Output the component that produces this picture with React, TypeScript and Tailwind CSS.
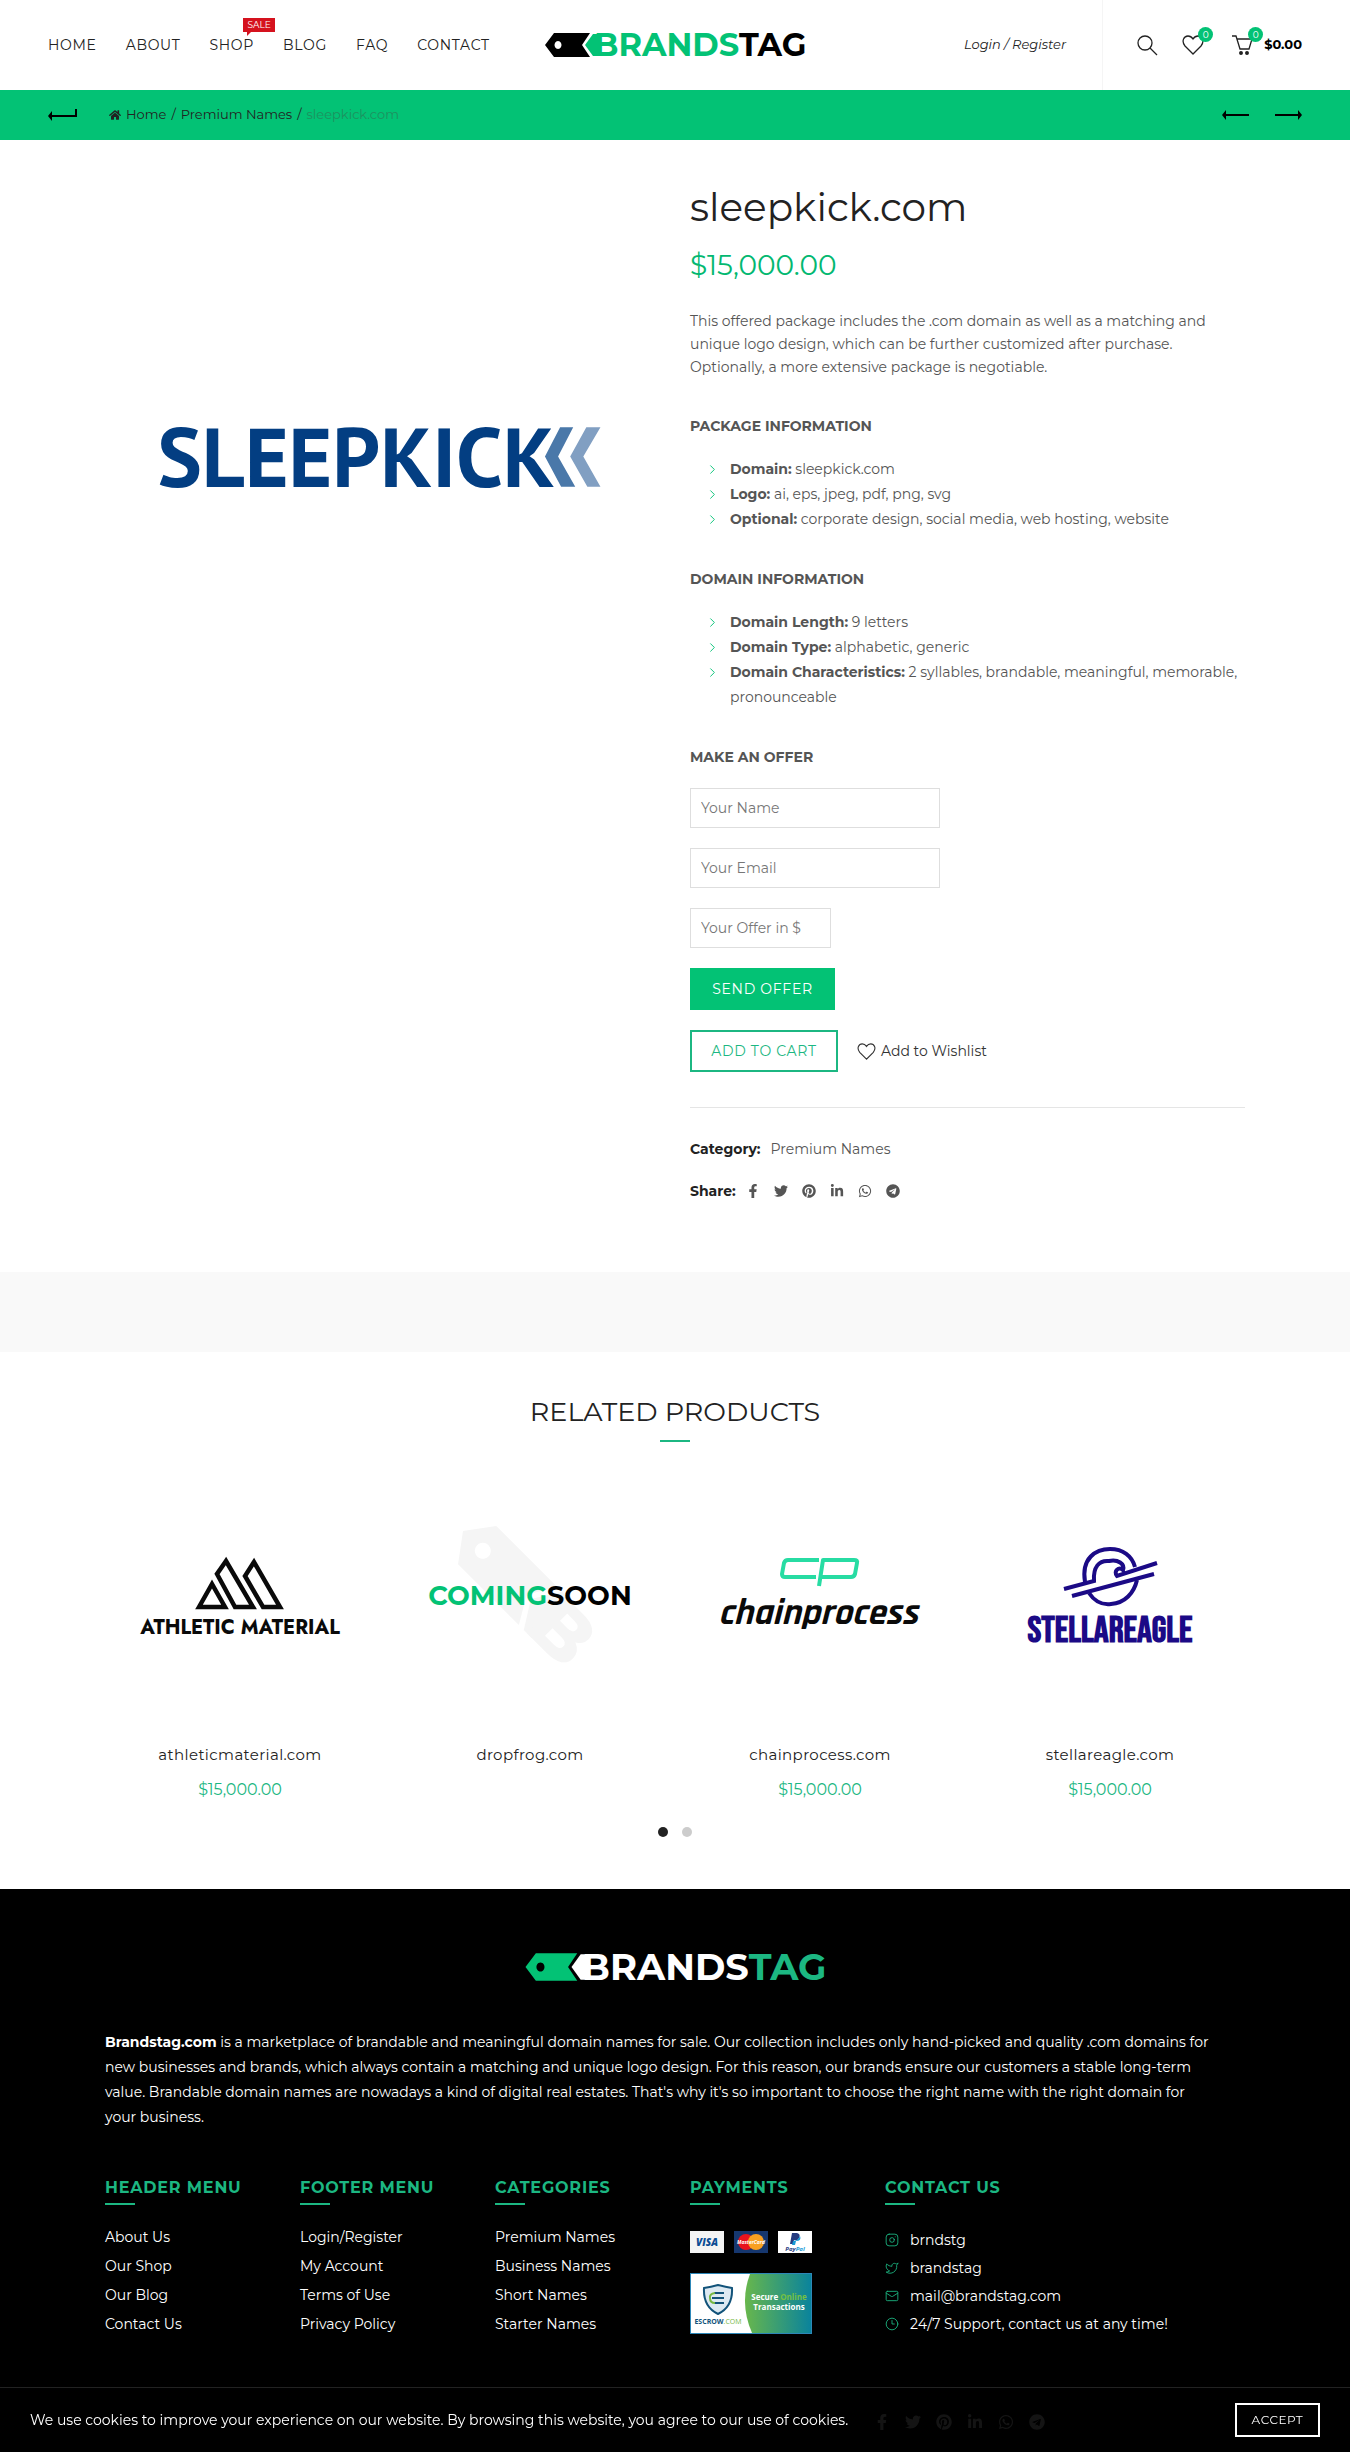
import React, { useState } from 'react';
import {
  FaFacebookF,
  FaHome,
  FaLinkedinIn,
  FaPinterest,
  FaTelegram,
  FaTwitter,
  FaWhatsapp,
} from 'react-icons/fa';
import { ChevronRight, Clock3, Instagram, Mail, Twitter } from 'lucide-react';

const NAV_ITEMS = ['Home', 'About', 'Shop', 'Blog', 'FAQ', 'Contact'];

const SOCIALS = [
  { name: 'Facebook', Icon: FaFacebookF },
  { name: 'Twitter', Icon: FaTwitter },
  { name: 'Pinterest', Icon: FaPinterest },
  { name: 'LinkedIn', Icon: FaLinkedinIn },
  { name: 'WhatsApp', Icon: FaWhatsapp },
  { name: 'Telegram', Icon: FaTelegram },
];

const PACKAGE_INFO = [
  { label: 'Domain:', value: 'sleepkick.com' },
  { label: 'Logo:', value: 'ai, eps, jpeg, pdf, png, svg' },
  { label: 'Optional:', value: 'corporate design, social media, web hosting, website' },
];

const DOMAIN_INFO = [
  { label: 'Domain Length:', value: '9 letters' },
  { label: 'Domain Type:', value: 'alphabetic, generic' },
  { label: 'Domain Characteristics:', value: '2 syllables, brandable, meaningful, memorable, pronounceable' },
];

const FOOTER_MENUS = [
  { title: 'Header Menu', links: ['About Us', 'Our Shop', 'Our Blog', 'Contact Us'] },
  { title: 'Footer Menu', links: ['Login/Register', 'My Account', 'Terms of Use', 'Privacy Policy'] },
  { title: 'Categories', links: ['Premium Names', 'Business Names', 'Short Names', 'Starter Names'] },
];

const CONTACTS = [
  { text: 'brndstg', Icon: Instagram },
  { text: 'brandstag', Icon: Twitter },
  { text: 'mail@brandstag.com', Icon: Mail },
  { text: '24/7 Support, contact us at any time!', Icon: Clock3 },
];

interface BrandLogoProps {
  className: string;
  tag: string;
  brand: string;
  suffix: string;
}

const BrandLogo: React.FC<BrandLogoProps> = ({ className, tag, brand, suffix }) => (
  <svg viewBox="0 -8 260 40" className={className} role="img" aria-label="Brandstag">
    <path
      fillRule="evenodd"
      fill={tag}
      d="M0 12L9 0H45L37 12L45 24H9ZM13 8a3.5 4 0 1 0 .01 0Z"
    />
    <path fill={brand} d="M40 12L48 1H54V23H48Z" />
    <text x="49" y="23" fontFamily="Montserrat, Inter, sans-serif" fontWeight="700" fontSize="32" fill={brand}>
      BRANDS
      <tspan fill={suffix}>TAG</tspan>
    </text>
  </svg>
);

const SearchIcon = () => (
  <svg viewBox="0 0 21 21" className="h-[21px] w-[21px]" fill="none" stroke="currentColor" strokeWidth="1.3">
    <circle cx="8" cy="8" r="7" />
    <path d="M13 13L20 20" />
  </svg>
);

const HeartIcon = ({ className }: { className: string }) => (
  <svg viewBox="0 0 22 20" className={className} fill="none" stroke="currentColor" strokeWidth="1.3">
    <path d="M11 19L3 11C-1 6 2 1 6 1C8.500 1 10 2.500 11 4C12 2.500 13.500 1 16 1C20 1 23 6 19 11Z" />
  </svg>
);

const CartIcon = () => (
  <svg viewBox="0 0 22 20" className="h-5 w-[22px]" fill="none" stroke="currentColor" strokeWidth="1.3">
    <path d="M0 1H4L8 14H17L20 4H5" />
    <circle cx="9" cy="18" r="1.300" fill="currentColor" />
    <circle cx="15" cy="18" r="1.300" fill="currentColor" />
  </svg>
);

const ArrowIcon = ({ flip = false }: { flip?: boolean }) => (
  <svg viewBox="0 0 27 10" className={`h-2.5 w-[27px] ${flip ? 'rotate-180' : ''}`}>
    <path d="M0 5L4 0V4H27V6H4V10Z" />
  </svg>
);

const Badge = () => (
  <span className="absolute -top-2 left-4 flex h-[15px] w-[15px] items-center justify-center rounded-full bg-[#03c275] text-[9px] leading-none text-white">
    0
  </span>
);

const Header = () => (
  <header className="grid h-[90px] grid-cols-[1fr_auto_1fr] items-center bg-white text-[#222]">
    <nav className="flex items-center gap-[29px] pl-12 text-sm tracking-wider uppercase">
      {NAV_ITEMS.map((item) => (
        <a key={item} href="#" className="relative">
          {item}
          {item === 'Shop' && (
            <span className="absolute -top-[17px] left-[34px] bg-[#d5121e] px-1 text-[9px] leading-[14px] tracking-normal text-white">
              Sale
              <span className="absolute top-full left-1 border-t-4 border-r-4 border-t-[#d5121e] border-r-transparent" />
            </span>
          )}
        </a>
      ))}
    </nav>

    <a href="#">
      <BrandLogo className="h-10 w-[260px]" tag="#000" brand="#03c275" suffix="#000" />
    </a>

    <div className="flex h-full items-center justify-end">
      <a href="#" className="mr-9 text-[13px] italic">
        Login / Register
      </a>
      <div className="h-full border-l border-[#f5f5f5]" />
      <div className="flex items-center pr-12 pl-[34px]">
        <button type="button" aria-label="Search" className="mr-6">
          <SearchIcon />
        </button>
        <a href="#" aria-label="Wishlist" className="relative mr-7">
          <HeartIcon className="h-5 w-[22px]" />
          <Badge />
        </a>
        <a href="#" className="flex items-center gap-[10px]">
          <span className="relative">
            <CartIcon />
            <Badge />
          </span>
          <span className="text-[13px] font-bold text-black">$0.00</span>
        </a>
      </div>
    </div>
  </header>
);

const Breadcrumbs = () => (
  <div className="flex h-[50px] items-center justify-between bg-[#03c275] px-12 text-[13px] text-[#222]">
    <div className="flex items-center">
      <a href="#" aria-label="Back" className="mr-[31px]">
        <svg viewBox="0 0 30 12" className="h-3 w-[30px]">
          <path d="M0 7L4 2V6H27V0H29V8H4V12Z" />
        </svg>
      </a>
      <nav className="flex items-center gap-[5px]">
        <a href="#" className="flex items-center gap-[5px]">
          <FaHome className="h-3 w-3" />
          Home
        </a>
        <span>/</span>
        <a href="#">Premium Names</a>
        <span>/</span>
        <span className="text-[#1e915f]">sleepkick.com</span>
      </nav>
    </div>
    <div className="flex items-center gap-[26px] text-black">
      <a href="#" aria-label="Previous product">
        <ArrowIcon />
      </a>
      <a href="#" aria-label="Next product">
        <ArrowIcon flip />
      </a>
    </div>
  </div>
);

const InfoList = ({ items }: { items: { label: string; value: string }[] }) => (
  <ul className="mt-[19px] pl-[15px] leading-[25px]">
    {items.map((item) => (
      <li key={item.label} className="flex">
        <ChevronRight className="mt-[5px] mr-2.5 h-[15px] w-[15px] shrink-0 text-[#03c275]" strokeWidth={1.5} />
        <span>
          <strong className="font-bold">{item.label}</strong> {item.value}
        </span>
      </li>
    ))}
  </ul>
);

const SleepkickLogo = () => (
  <svg viewBox="0 0 550 550" className="w-full" role="img" aria-label="Sleepkick">
    <text x="52" y="304" fontFamily="'PT Sans', 'Open Sans', sans-serif" fontWeight="700" fontSize="83" fill="#033e82">
      SLEEPKICK
    </text>
    <path fill="#4a78a9" d="M451 245H464L449 274L466 304H452L436 274Z" />
    <path fill="#819fc2" d="M477 245H491L474 274L491 304H478L461 274Z" />
  </svg>
);

const OfferForm = () => (
  <form className="mt-[19px] flex flex-col items-start gap-5" onSubmit={(e) => e.preventDefault()}>
    <input
      type="text"
      aria-label="Your Name"
      placeholder="Your Name"
      className="h-10 w-[250px] border border-[#dedede] px-[10px] placeholder:text-[#777]"
    />
    <input
      type="email"
      aria-label="Your Email"
      placeholder="Your Email"
      className="h-10 w-[250px] border border-[#dedede] px-[10px] placeholder:text-[#777]"
    />
    <input
      type="text"
      aria-label="Your Offer in $"
      placeholder="Your Offer in $"
      className="h-10 w-[141px] border border-[#dedede] px-[10px] placeholder:text-[#777]"
    />
    <button type="submit" className="h-[42px] w-[145px] bg-[#03c275] tracking-wider text-white uppercase">
      Send Offer
    </button>
  </form>
);

const Product = () => (
  <main className="mx-auto grid max-w-[1170px] grid-cols-2 gap-[30px] px-[15px] pt-10 pb-[69px] text-sm text-[#555]">
    <SleepkickLogo />
    <div>
      <h1 className="text-[39px] leading-[54px] text-[#222]">sleepkick.com</h1>
      <p className="mt-3 text-[28px] leading-[38px] text-[#03b871]">$15,000.00</p>
      <p className="mt-[26px] leading-[23px]">
        This offered package includes the .com domain as well as a matching and unique logo design, which can be
        further customized after purchase. Optionally, a more extensive package is negotiable.
      </p>

      <h2 className="mt-[35px] leading-6 font-bold uppercase">Package Information</h2>
      <InfoList items={PACKAGE_INFO} />
      <h2 className="mt-[35px] leading-6 font-bold uppercase">Domain Information</h2>
      <InfoList items={DOMAIN_INFO} />
      <h2 className="mt-[35px] leading-6 font-bold uppercase">Make an Offer</h2>
      <OfferForm />

      <div className="mt-5 flex items-center">
        <button
          type="button"
          className="h-[42px] w-[148px] border-2 border-[#1cb782] tracking-wider text-[#1cb782] uppercase"
        >
          Add to Cart
        </button>
        <a href="#" className="ml-[19px] flex items-center gap-[5px] text-[#333]">
          <HeartIcon className="h-[17px] w-[19px]" />
          Add to Wishlist
        </a>
      </div>

      <div className="mt-[35px] border-t border-[#e5e5e5] pt-[29px] leading-6">
        <p>
          <strong className="mr-2.5 font-bold text-[#222]">Category:</strong>
          <a href="#">Premium Names</a>
        </p>
        <div className="mt-[18px] flex items-center">
          <strong className="mr-2.5 font-bold text-[#222]">Share:</strong>
          <div className="flex gap-3.5">
            {SOCIALS.map(({ name, Icon }) => (
              <a key={name} href="#" aria-label={name}>
                <Icon className="h-3.5 w-3.5" />
              </a>
            ))}
          </div>
        </div>
      </div>
    </div>
  </main>
);

const AthleticLogo = () => (
  <svg viewBox="0 0 270 270" className="w-full" role="img" aria-label="Athletic Material">
    <g transform="translate(29 0)" fill="none" stroke="#0a0a0a" strokeWidth="4.5" strokeLinejoin="miter">
      <path d="M65 142L78 119L91 142Z" />
      <path d="M92 96L83 109L101 142H119Z" />
      <path d="M120 97L111 111L129 142H146Z" />
    </g>
    <text x="135" y="169" textAnchor="middle" fontFamily="Jost, Lato, sans-serif" fontWeight="700" fontSize="20" fill="#0a0a0a">
      ATHLETIC MATERIAL
    </text>
  </svg>
);

const ComingSoonLogo = () => (
  <svg viewBox="0 0 270 270" className="w-full" role="img" aria-label="Coming soon">
    <g transform="translate(68 66) rotate(45)">
      <path
        fillRule="evenodd"
        fill="#f5f5f5"
        d="M0 0L20 -27H106L90 0L106 27H20ZM28 -8a8 8 0 1 0 .01 0Z"
      />
      <path fill="#f5f5f5" d="M96 0L113 -27H125V27H113Z" />
      <text x="112" y="27" fontFamily="Montserrat, Inter, sans-serif" fontWeight="800" fontSize="76" fill="#f5f5f5">
        B
      </text>
    </g>
    <text x="135" y="140" textAnchor="middle" fontFamily="Montserrat, Inter, sans-serif" fontWeight="700" fontSize="27" fill="#03c275">
      COMING
      <tspan fill="#000">SOON</tspan>
    </text>
  </svg>
);

const ChainprocessLogo = () => (
  <svg viewBox="0 0 270 270" className="w-full" role="img" aria-label="Chainprocess">
    <g fill="none" stroke="#27dca3" strokeWidth="4" strokeLinejoin="round">
      <path d="M134 95H103Q100 95 99 98L97 109Q97 112 100 112H131" />
      <path d="M134 121L138 95H169Q173 95 172 98L170 109Q169 112 166 112H137" />
    </g>
    <text
      x="133"
      y="159"
      textAnchor="middle"
      fontFamily="Rajdhani, 'Barlow Condensed', 'Roboto Condensed', Oswald, Roboto, sans-serif"
      fontWeight="700"
      fontStyle="italic"
      fontSize="37"
      fill="#0a0a0a"
    >
      chainprocess
    </text>
  </svg>
);

const StellareagleLogo = () => (
  <svg viewBox="0 0 270 270" className="w-full" role="img" aria-label="Stellareagle">
    <g fill="none" stroke="#1b0a86" strokeWidth="4">
      <path d="M110 117C106 93 121 84 135 84C148 84 157 91 160 102" />
      <path d="M114 128C120 137 128 140 136 139C150 138 159 128 162 115" />
      <path d="M89 124L119 116C118 102 124 95 134 96C143 94 150 99 148 105C144 101 138 106 142 111L182 98" />
      <path d="M97 131L179 109" />
    </g>
    <text
      x="135"
      y="177"
      textAnchor="middle"
      fontFamily="'Bebas Neue', Oswald, 'Barlow Condensed', 'Roboto Condensed', Roboto, sans-serif"
      fontWeight="700"
      fontSize="37"
      fill="#1b0a86"
    >
      STELLAREAGLE
    </text>
  </svg>
);

const RELATED = [
  { name: 'athleticmaterial.com', price: '$15,000.00', Logo: AthleticLogo },
  { name: 'dropfrog.com', price: '', Logo: ComingSoonLogo },
  { name: 'chainprocess.com', price: '$15,000.00', Logo: ChainprocessLogo },
  { name: 'stellareagle.com', price: '$15,000.00', Logo: StellareagleLogo },
];

const RelatedProducts = () => {
  const [page, setPage] = useState<number>(0);

  return (
    <section className="mx-auto max-w-[1170px] px-[15px] pt-[42px] pb-[52px] text-center">
      <h2 className="text-[27px] leading-9 text-[#222] uppercase">Related Products</h2>
      <div className="mx-auto mt-[10px] h-0.5 w-[30px] bg-[#1cb782]" />
      <div className="mt-[23px] grid grid-cols-4 gap-5">
        {RELATED.map(({ name, price, Logo }) => (
          <a key={name} href="#" className="block">
            <Logo />
            <h3 className="mt-2 text-[15px] leading-6 tracking-wide text-[#222]">{name}</h3>
            <p className="mt-[11px] h-6 leading-6 text-[#1cb782]">{price}</p>
          </a>
        ))}
      </div>
      <div className="mt-[25px] flex justify-center gap-3.5">
        {[0, 1].map((index) => (
          <button
            key={index}
            type="button"
            aria-label={`Page ${index + 1}`}
            onClick={() => setPage(index)}
            className={`h-2.5 w-2.5 rounded-full ${page === index ? 'bg-[#222]' : 'bg-[#ccc]'}`}
          />
        ))}
      </div>
    </section>
  );
};

const FooterTitle = ({ children }: { children: React.ReactNode }) => (
  <div className="text-[#1cb782]">
    <h4 className="text-base leading-6 font-bold tracking-wider whitespace-nowrap uppercase">{children}</h4>
    <div className="mt-[3px] h-0.5 w-[30px] bg-[#1cb782]" />
  </div>
);

const PaymentCards = () => (
  <svg viewBox="0 0 122 22" className="h-[22px] w-[122px]" role="img" aria-label="Visa, MasterCard, PayPal">
    <rect width="34" height="22" fill="#f4f4f4" />
    <text x="17" y="15" textAnchor="middle" fontFamily="'Open Sans', sans-serif" fontWeight="800" fontStyle="italic" fontSize="10" fill="#0b4c93">
      VISA
    </text>
    <rect x="44" width="34" height="22" fill="#16376f" />
    <circle cx="56" cy="11" r="8" fill="#e8131d" />
    <circle cx="66" cy="11" r="8" fill="#f8a021" />
    <text x="61" y="13" textAnchor="middle" fontFamily="'Open Sans', sans-serif" fontWeight="700" fontStyle="italic" fontSize="5" fill="#fff">
      MasterCard
    </text>
    <rect x="88" width="34" height="22" fill="#fff" />
    <path fill="#253b80" d="M102 2H107Q111 3 109 7Q108 10 104 9L103 13H100Z" />
    <path fill="#179bd7" d="M110 5Q112 10 106 10L105 14H102L103 10Q108 10 110 5Z" />
    <text x="105" y="20" textAnchor="middle" fontFamily="'Open Sans', sans-serif" fontWeight="700" fontStyle="italic" fontSize="6" fill="#253b80">
      Pay
      <tspan fill="#179bd7">Pal</tspan>
    </text>
  </svg>
);

const EscrowBadge = () => (
  <svg viewBox="0 0 122 61" className="mt-5 h-[61px] w-[122px]" role="img" aria-label="Escrow.com secure online transactions">
    <defs>
      <linearGradient id="escrow" x1="0" y1="0" x2="1" y2="0">
        <stop offset="0" stopColor="#68b74c" />
        <stop offset="1" stopColor="#0a839c" />
      </linearGradient>
    </defs>
    <rect width="122" height="61" fill="#2d87b8" />
    <rect x="1" y="1" width="120" height="59" fill="#fff" />
    <path fill="url(#escrow)" d="M60 1H121V60H62Q49 30 60 1Z" />
    <path fill="#dce9f2" stroke="#12537a" strokeWidth="2" d="M28 12Q36 14 42 15Q43 34 28 41Q13 34 14 15Q21 14 28 12Z" />
    <path fill="none" stroke="#12537a" strokeWidth="2" d="M24 20H34M22 25H34M24 30H34" />
    <path fill="none" stroke="#76b843" strokeWidth="2" d="M25 20Q19 21 20 25Q20 30 25 30" />
    <text x="28" y="51" textAnchor="middle" fontFamily="'Open Sans', sans-serif" fontWeight="700" fontSize="7" fill="#12537a">
      ESCROW
      <tspan fill="#76b843" fontWeight="400">.COM</tspan>
    </text>
    <text x="89" y="27" textAnchor="middle" fontFamily="'Open Sans', sans-serif" fontWeight="700" fontSize="8" fill="#fff">
      Secure <tspan fill="#76c043">Online</tspan>
    </text>
    <text x="89" y="37" textAnchor="middle" fontFamily="'Open Sans', sans-serif" fontWeight="700" fontSize="8" fill="#fff">
      Transactions
    </text>
  </svg>
);

const Footer = () => (
  <footer className="bg-black pt-[55px] text-sm text-white">
    <div className="mx-auto max-w-[1170px] px-[15px]">
      <BrandLogo className="mx-auto h-[46px] w-[300px]" tag="#03c275" brand="#fff" suffix="#1cb782" />
      <p className="mt-10 max-w-[1110px] leading-[25px]">
        <strong className="font-bold">Brandstag.com</strong> is a marketplace of brandable and meaningful domain names
        for sale. Our collection includes only hand-picked and quality .com domains for new businesses and brands,
        which always contain a matching and unique logo design. For this reason, our brands ensure our customers a
        stable long-term value. Brandable domain names are nowadays a kind of digital real estates. That's why it's so
        important to choose the right name with the right domain for your business.
      </p>
      <div className="mt-[46px] grid grid-cols-6 gap-[30px]">
        {FOOTER_MENUS.map((menu) => (
          <div key={menu.title}>
            <FooterTitle>{menu.title}</FooterTitle>
            <ul className="mt-[18px] leading-[29px]">
              {menu.links.map((link) => (
                <li key={link}>
                  <a href="#">{link}</a>
                </li>
              ))}
            </ul>
          </div>
        ))}
        <div>
          <FooterTitle>Payments</FooterTitle>
          <div className="mt-[26px]">
            <PaymentCards />
            <EscrowBadge />
          </div>
        </div>
        <div className="col-span-2">
          <FooterTitle>Contact Us</FooterTitle>
          <ul className="mt-[21px] leading-7">
            {CONTACTS.map(({ text, Icon }) => (
              <li key={text} className="flex items-center gap-[11px]">
                <Icon className="h-3.5 w-3.5 text-[#1cb782]" strokeWidth={1.5} />
                {text}
              </li>
            ))}
          </ul>
        </div>
      </div>
    </div>
    <div className="mt-12 flex h-[65px] items-center justify-end pt-1 pr-[305px]">
      <div className="flex gap-[15px]">
        {SOCIALS.map(({ name, Icon }) => (
          <a key={name} href="#" aria-label={name} className="text-[#ccc]">
            <Icon className="h-4 w-4" />
          </a>
        ))}
      </div>
    </div>
  </footer>
);

const CookieBar = () => {
  const [accepted, setAccepted] = useState<boolean>(false);

  if (accepted) return null;

  return (
    <div className="fixed inset-x-0 bottom-0 flex h-[65px] items-center justify-between border-t border-[#222] bg-black/90 px-[30px] text-sm text-white">
      <p>
        We use cookies to improve your experience on our website. By browsing this website, you agree to our use of
        cookies.
      </p>
      <button
        type="button"
        onClick={() => setAccepted(true)}
        className="h-[34px] w-[85px] border-2 border-white text-xs tracking-wider uppercase"
      >
        Accept
      </button>
    </div>
  );
};

const App: React.FC = () => {
  return (
    <div className="bg-white font-['Montserrat','Inter',sans-serif]">
      <Header />
      <Breadcrumbs />
      <Product />
      <div className="h-20 bg-[#f9f9f9]" />
      <RelatedProducts />
      <Footer />
      <CookieBar />
    </div>
  );
};

export default App;
